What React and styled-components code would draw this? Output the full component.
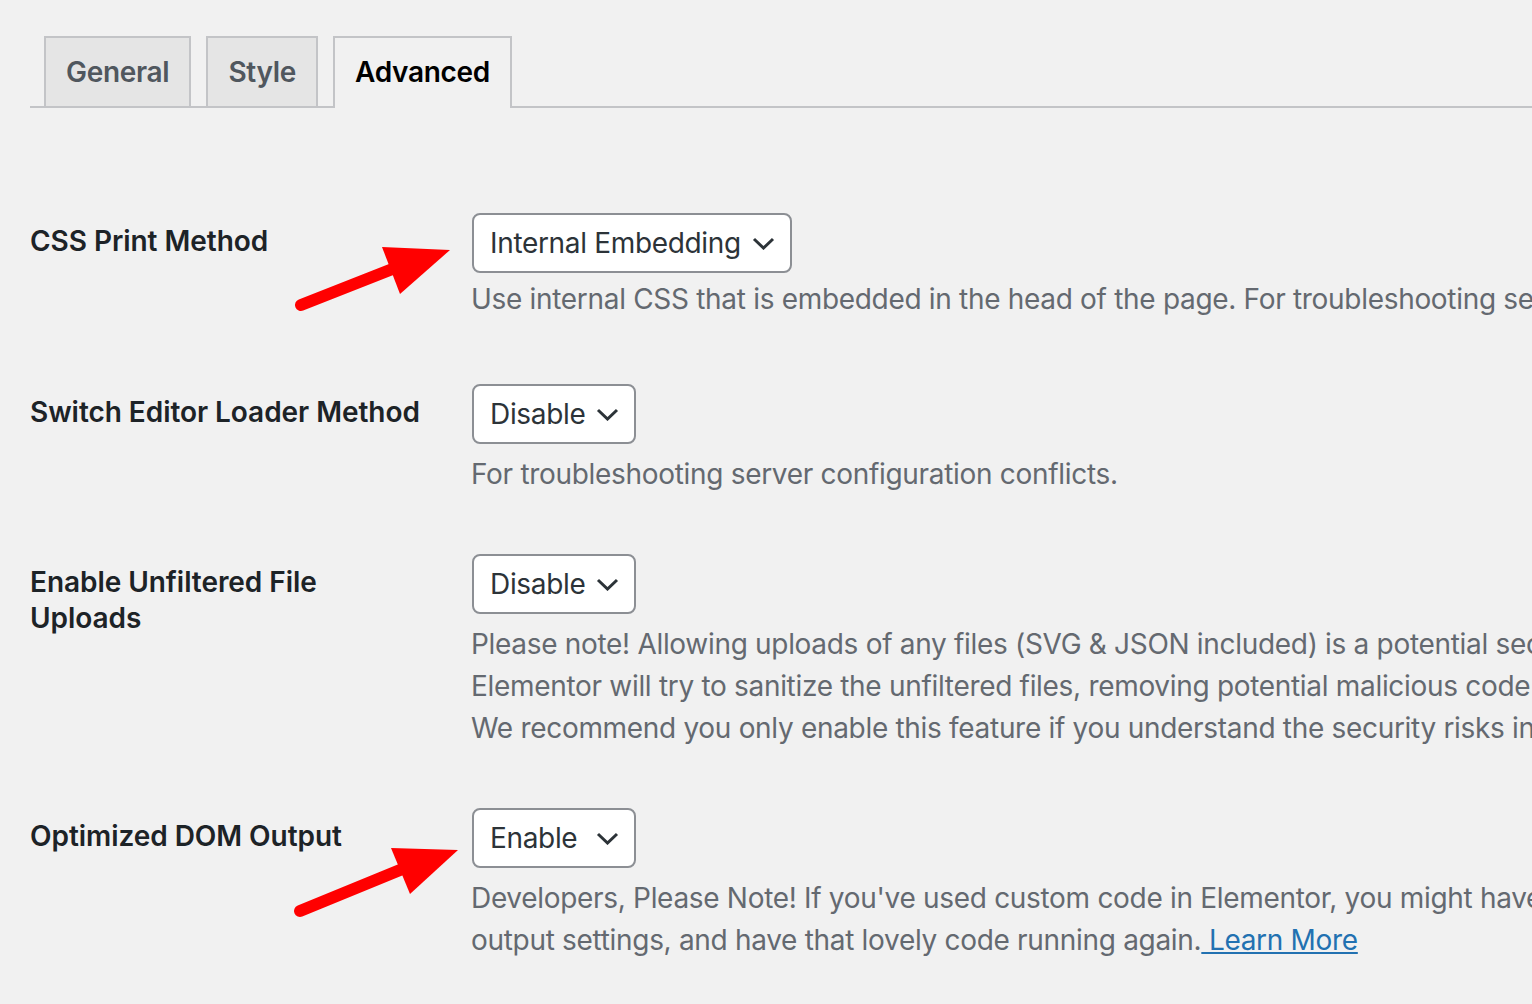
import React from "react";
import styled, { createGlobalStyle } from "styled-components";

const Global = createGlobalStyle`
  html, body { margin: 0; padding: 0; background: #f1f1f1; }
  body { font-family: Inter, "Noto Sans", "Liberation Sans", sans-serif; }
`;

const Page = styled.div`
  position: relative;
  width: 1532px;
  height: 1004px;
  overflow: hidden;
  background: #f1f1f1;
  padding-left: 30px;
  box-sizing: border-box;
`;

const TabBar = styled.nav`
  display: flex;
  gap: 15px;
  padding: 36px 0 0 14px;
  border-bottom: 2px solid #c3c4c7;
  margin-right: -30px;
`;

const Tab = styled.div`
  font-size: 28px;
  font-weight: 600;
  line-height: 48px;
  letter-spacing: -0.3px;
  padding: 10px 20px;
  border: 2px solid #c3c4c7;
  border-bottom: none;
  margin-bottom: ${p => (p.$active ? "-2px" : "0")};
  padding-bottom: ${p => (p.$active ? "12px" : "10px")};
  background: ${p => (p.$active ? "#f1f1f1" : "#e5e5e5")};
  color: ${p => (p.$active ? "#000" : "#50575e")};
`;

const Table = styled.div`
  display: flex;
  flex-direction: column;
  margin-top: 75px;
`;

const Row = styled.div`
  display: grid;
  grid-template-columns: 440px 1fr;
`;

const Label = styled.div`
  padding: 40px 20px 40px 0;
  font-size: 28px;
  font-weight: 600;
  line-height: 36px;
  letter-spacing: -0.05px;
  color: #1d2327;
`;

const Cell = styled.div`
  padding: 30px 0 29px 1px;
  min-width: 0;
`;

const Select = styled.div`
  display: flex;
  align-items: center;
  justify-content: space-between;
  box-sizing: border-box;
  width: ${p => p.$width}px;
  height: 60px;
  margin-left: 1px;
  padding: 0 15px 0 16px;
  border: 2px solid #8c8f94;
  border-radius: 8px;
  background: #fff;
  color: #2c3338;
  font-size: 28px;
  letter-spacing: -0.33px;
`;

const Chevron = () => (
  <svg width="23" height="13" viewBox="0 0 23 13">
    <polyline points="2,2 11.5,11 21,2" fill="none" stroke="#2c3338" strokeWidth="3" />
  </svg>
);

const Desc = styled.p`
  margin: ${p => (p.$tight ? "5px 0 5px" : "9px 0 0")};
  font-size: 28px;
  line-height: 42px;
  letter-spacing: -0.31px;
  color: #646970;
  white-space: nowrap;
`;

const Link = styled.a`
  color: #2271b1;
  text-decoration: underline;
`;

const Arrows = styled.svg`
  position: absolute;
  left: 0;
  top: 0;
  pointer-events: none;
`;

export default function App() {
  return (
    <>
      <Global />
      <Page>
        <TabBar>
          <Tab>General</Tab>
          <Tab>Style</Tab>
          <Tab $active>Advanced</Tab>
        </TabBar>
        <Table>
          <Row>
            <Label>CSS Print Method</Label>
            <Cell>
              <Select $width={320}>
                <span>Internal Embedding</span>
                <Chevron />
              </Select>
              <Desc $tight>
                Use internal CSS that is embedded in the head of the page. For troubleshooting server configuration conflicts and managing development environments.
              </Desc>
            </Cell>
          </Row>
          <Row>
            <Label>Switch Editor Loader Method</Label>
            <Cell>
              <Select $width={164}>
                <span>Disable</span>
                <Chevron />
              </Select>
              <Desc>For troubleshooting server configuration conflicts.</Desc>
            </Cell>
          </Row>
          <Row>
            <Label>
              Enable Unfiltered File
              <br />
              Uploads
            </Label>
            <Cell>
              <Select $width={164}>
                <span>Disable</span>
                <Chevron />
              </Select>
              <Desc>
                Please note! Allowing uploads of any files (SVG &amp; JSON included) is a potential security risk.
                <br />
                Elementor will try to sanitize the unfiltered files, removing potential malicious code and scripts.
                <br />
                We recommend you only enable this feature if you understand the security risks involved.
              </Desc>
            </Cell>
          </Row>
          <Row>
            <Label>Optimized DOM Output</Label>
            <Cell>
              <Select $width={164}>
                <span>Enable</span>
                <Chevron />
              </Select>
              <Desc>
                Developers, Please Note! If you've used custom code in Elementor, you might have experienced a snippet of it not running as expected. To fix this, disable the Optimized DOM
                <br />
                output settings, and have that lovely code running again.<Link href="#"> Learn More</Link>
              </Desc>
            </Cell>
          </Row>
        </Table>
        <Arrows width="1532" height="1004" viewBox="0 0 1532 1004">
          <line x1="301" y1="305" x2="395" y2="268" stroke="#ff0000" strokeWidth="12" strokeLinecap="round" />
          <polygon points="382,247 450,250 400,294" fill="#ff0000" />
          <line x1="300" y1="911" x2="400" y2="870" stroke="#ff0000" strokeWidth="12" strokeLinecap="round" />
          <polygon points="391,848 458,850 410,894" fill="#ff0000" />
        </Arrows>
      </Page>
    </>
  );
}
